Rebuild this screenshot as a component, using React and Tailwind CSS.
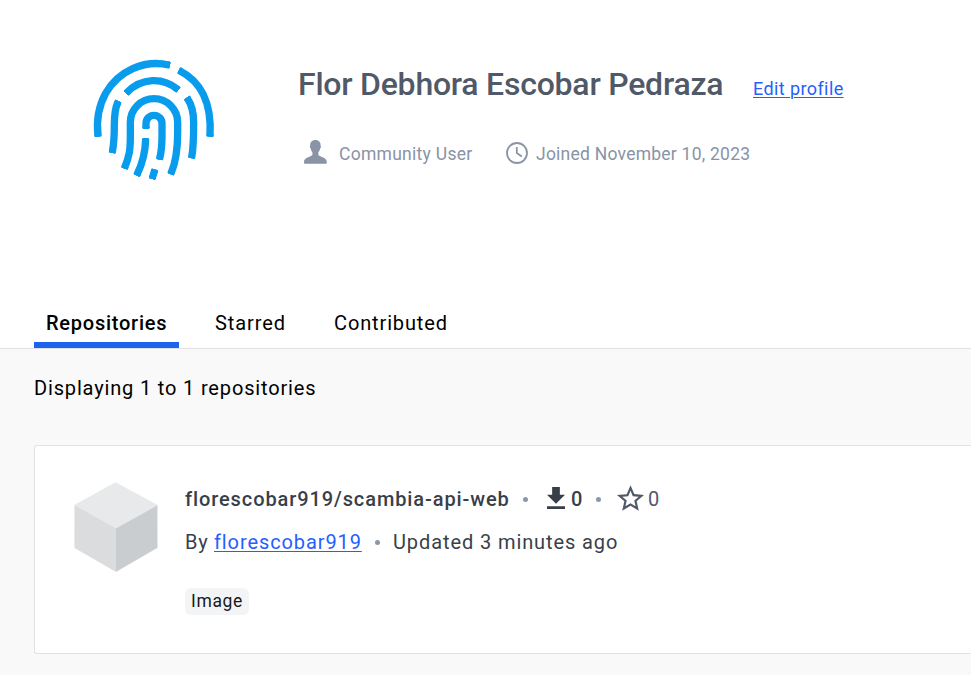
const tabs = [
  { label: "Repositories", active: true, box: "w-[145px] pl-3", text: "font-medium tracking-[0.75px]" },
  { label: "Starred", box: "ml-6 w-[95px] pl-3", text: "tracking-[0.9px]" },
  { label: "Contributed", box: "ml-6 w-[137px] pl-3", text: "tracking-[0.87px]" },
];

const ridges = [
  "M42 257C37 215 42 172 65 130C103 63 180 28 255 45",
  "M287 62C347 92 384 155 378 257",
  "M128 128C172 82 237 81 281 118",
  "M102 156C93 174 91 192 91 225C91 260 91 275 85 306",
  "M310 145C324 165 329 190 329 218C329 262 329 290 323 322",
  "M122 353C136 318 139 300 139 262V217A71 71 0 0 1 281 217V248C281 300 277 333 261 370",
  "M186 233V220A24 24 0 0 1 234 220V257C234 290 232 305 227 326",
  "M185 268C184 307 177 337 159 374",
  "M212 361L205 384",
];

function Fingerprint() {
  return (
    <svg className="h-[140px] w-[140px] shrink-0" viewBox="0 0 420 420" fill="none" stroke="#099cec" strokeWidth="22">
      <marker id="ridge-end" viewBox="-6 -11 10 22" markerWidth="10" markerHeight="22" markerUnits="userSpaceOnUse" orient="auto-start-reverse">
        <rect x="-5" y="-11" width="9" height="22" rx="4" fill="#099cec" stroke="none" />
      </marker>
      {ridges.map((d) => (
        <path key={d} d={d} markerStart="url(#ridge-end)" markerEnd="url(#ridge-end)" />
      ))}
    </svg>
  );
}

function UserIcon() {
  return (
    <svg className="ml-[5px] h-6 w-6 shrink-0" viewBox="0 0 24 24" fill="#8b93a7">
      <path d="M12.4 0C8.9 0 7 2.3 7.2 5.7C6.6 5.9 6.9 8.2 7.7 8.6C8 10.3 8.6 11.4 9.4 12.2V15C7.4 17.3 1.2 17 .9 22.4Q.9 23.8 2 23.8H22.8Q23.9 23.8 23.9 22.4C23.6 17 17.4 17.3 15.4 15V12.2C16.2 11.4 16.8 10.3 17.1 8.6C17.9 8.2 18.2 5.9 17.6 5.7C17.8 2.3 15.9 0 12.4 0Z" />
    </svg>
  );
}

function ClockIcon() {
  return (
    <svg className="mt-0.5 h-6 w-6 shrink-0" viewBox="0 0 24 24" fill="none" stroke="#8b93a7" strokeWidth="1.8">
      <circle cx="12" cy="12" r="10" />
      <path d="M11.8 6V12L16.8 15.4" />
    </svg>
  );
}

function Cube() {
  return (
    <svg className="mt-9 ml-[39px] h-[91px] w-[84px] shrink-0" viewBox="0 0 84 91">
      <path d="M.3 23L41.5.3L83.7 23V66L42 90L.3 66Z" fill="#e7e9ea" />
      <path d="M.8 23.5L42 46.5V89.7L.8 65.8Z" fill="#dadcde" />
      <path d="M42 46.5L83.2 23.5V65.8L42 89.7Z" fill="#cacdd0" />
    </svg>
  );
}

function Dot() {
  return <span className="h-[5px] w-[5px] shrink-0 rounded-full bg-[#8b98a9]" />;
}

export default function App() {
  return (
    <div className="flex h-[675px] w-full flex-col overflow-hidden bg-[#f9f9f9] whitespace-nowrap font-['Roboto',sans-serif] text-[20px] leading-[26px] text-black">
      <header className="flex h-[349px] shrink-0 flex-col border-b border-[#e1e2e6] bg-white">
        <section className="flex h-[298px] pt-[50px] pl-[84px]">
          <Fingerprint />
          <div className="ml-[74px] flex flex-col">
            <div className="flex h-[68px] items-center">
              <h1 className="w-[455px] text-[32px] font-medium tracking-[-0.23px] text-[#505968]">Flor Debhora Escobar Pedraza</h1>
              <a className="mt-[10px] text-[18px] tracking-[0.4px] text-[#2560ff] underline decoration-1 underline-offset-2" href="#">Edit profile</a>
            </div>
            <div className="mt-[21px] flex h-[26px] items-center text-[17.5px] text-[#8993a5]">
              <UserIcon />
              <span className="mt-1 ml-3 w-[166px] tracking-[0.28px]">Community User</span>
              <ClockIcon />
              <span className="mt-1 ml-[7px] tracking-[0.24px]">Joined November 10, 2023</span>
            </div>
          </div>
        </section>
        <nav className="flex h-[50px] pl-[34px]">
          {tabs.map((tab) => (
            <a key={tab.label} href="#" className={`flex flex-col pt-3 ${tab.box} ${tab.active ? "border-b-6 border-[#1d63ed]" : ""}`}>
              <span className={tab.text}>{tab.label}</span>
            </a>
          ))}
        </nav>
      </header>
      <main className="flex flex-col pt-[26px] pl-[34px]">
        <p className="tracking-[0.84px]">Displaying 1 to 1 repositories</p>
        <article className="mt-11 flex h-[209px] rounded-l-[3px] border border-r-0 border-[#e1e2e6] bg-white">
          <Cube />
          <div className="ml-[27px] flex flex-col pt-10 text-[#393f49]">
            <div className="flex h-[26px] items-center">
              <span className="w-[338px] font-medium tracking-[0.9px]">florescobar919/scambia-api-web</span>
              <Dot />
              <svg className="mb-0.5 ml-[19px] h-[22px] w-[18px] shrink-0" viewBox="5 3 14 17" fill="#393f49">
                <path d="M5 20h14v-2H5v2zM19 9h-4V3H9v6H5l7 7 7-7z" />
              </svg>
              <span className="ml-[6px] w-[25px] font-medium">0</span>
              <Dot />
              <svg className="mb-0.5 ml-4 h-[26px] w-[27px] shrink-0" viewBox="2 2 20 19" fill="#505968">
                <path d="M22 9.24l-7.19-.62L12 2 9.19 8.63 2 9.24l5.46 4.73L5.82 21 12 17.27 18.18 21l-1.63-7.03L22 9.24zM12 15.4l-3.76 2.27 1-4.28-3.32-2.88 4.38-.38L12 6.1l1.71 4.04 4.38.38-3.32 2.88 1 4.28L12 15.4z" />
              </svg>
              <span className="ml-1 text-[#505968]">0</span>
            </div>
            <div className="mt-[17px] flex h-[26px] items-center tracking-[0.9px]">
              <span className="w-[29px]">By</span>
              <a href="#" className="w-[161px] text-[#2560ff] underline decoration-1 underline-offset-2">florescobar919</a>
              <Dot />
              <span className="ml-[13px]">Updated 3 minutes ago</span>
            </div>
            <span className="mt-[33px] flex h-[27px] w-[64px] items-center justify-center rounded-[6px] bg-[#f3f4f6] pb-0.5 text-[17.5px] tracking-[0.65px] text-[#17191e]">Image</span>
          </div>
        </article>
      </main>
    </div>
  );
}
